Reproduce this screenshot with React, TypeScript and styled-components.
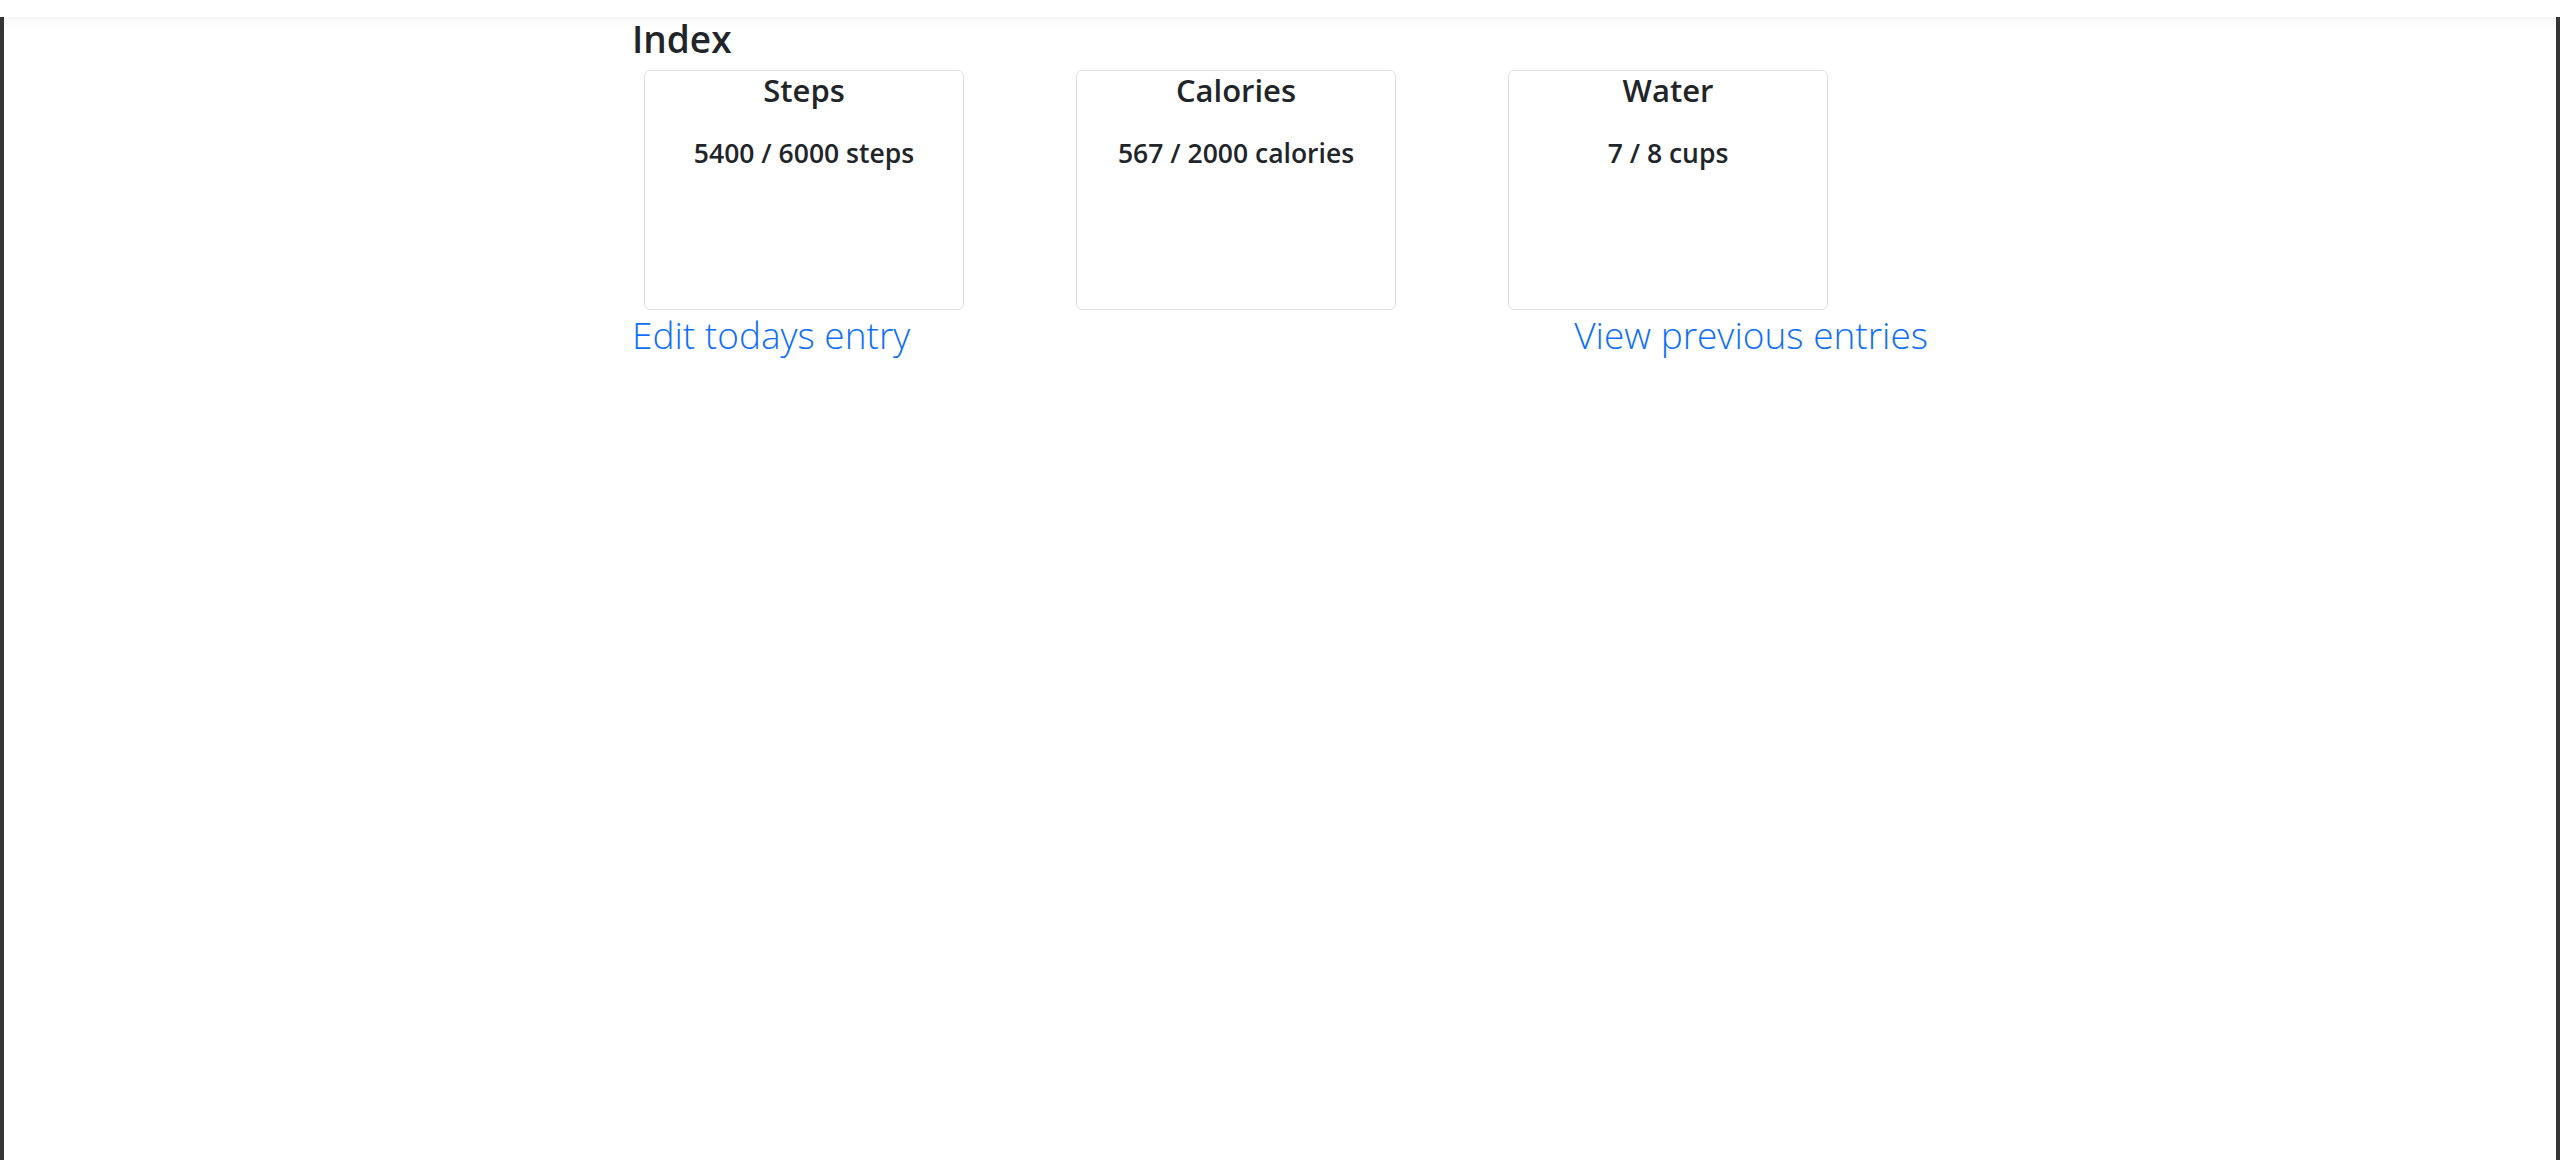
import styled, { createGlobalStyle } from 'styled-components';

const GlobalStyle = createGlobalStyle`
    html, body {
        margin: 0;
        padding: 0;
        background: #fff;
    }
    body {
        font-family: "Open Sans", "Noto Sans", sans-serif;
        color: #212529;
    }
    * {
        box-sizing: border-box;
    }
`;

type Goal = {
    title: string;
    current: number;
    target: number;
    unit: string;
};

const goals: Goal[] = [
    { title: 'Steps', current: 5400, target: 6000, unit: 'steps' },
    { title: 'Calories', current: 567, target: 2000, unit: 'calories' },
    { title: 'Water', current: 7, target: 8, unit: 'cups' },
];

export default function App() {
    return (
        <>
            <GlobalStyle />
            <Frame>
                <Container>
                    <PageTitle>Index</PageTitle>
                    <CardRow>
                        {goals.map((goal) => (
                            <Card key={goal.title}>
                                <CardTitle>{goal.title}</CardTitle>
                                <CardValue>
                                    {goal.current} / {goal.target} {goal.unit}
                                </CardValue>
                            </Card>
                        ))}
                    </CardRow>
                    <LinkRow>
                        <EntryLink href="#">Edit todays entry</EntryLink>
                        <EntryLink href="#">View previous entries</EntryLink>
                    </LinkRow>
                </Container>
            </Frame>
        </>
    );
}

const Frame = styled.div`
    min-height: 100vh;
    border-left: 4px solid #353535;
    border-right: 4px solid #353535;
    background: linear-gradient(#f5f5f5, #fff 10px);
`;

const Container = styled.div`
    max-width: 1320px;
    margin: 0 auto;
    padding: 0 12px;
`;

const PageTitle = styled.h1`
    margin: 17px 0 9px;
    font-size: 37px;
    font-weight: 600;
    line-height: 1.2;
`;

const CardRow = styled.div`
    display: grid;
    grid-template-columns: repeat(3, 1fr);
`;

const Card = styled.div`
    width: 320px;
    height: 240px;
    margin-left: 12px;
    padding-top: 1px;
    border: 1px solid rgba(0, 0, 0, 0.125);
    border-radius: 6px;
    text-align: center;
`;

const CardTitle = styled.h2`
    margin: 0;
    font-size: 31px;
    font-weight: 600;
    line-height: 1.2;
`;

const CardValue = styled.div`
    margin-top: 28px;
    font-size: 26.5px;
    font-weight: 600;
    line-height: 1.2;
`;

const LinkRow = styled.div`
    display: flex;
    justify-content: space-between;
    margin-top: 3px;
`;

const EntryLink = styled.a`
    font-size: 37px;
    font-weight: 300;
    line-height: 1.2;
    color: #0d6efd;
    text-decoration: none;
`;
